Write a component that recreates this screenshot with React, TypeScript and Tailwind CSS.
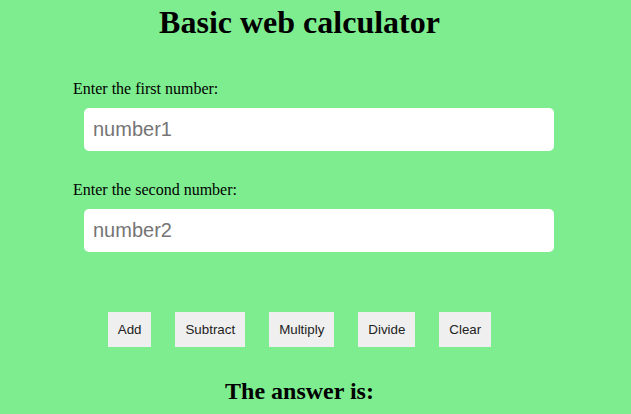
import { useState } from 'react'

const buttons = ['Add', 'Subtract', 'Multiply', 'Divide', 'Clear']

export default function App() {
  const [a, setA] = useState('')
  const [b, setB] = useState('')
  const [answer, setAnswer] = useState<string>('')

  function calc(op: string) {
    const x = parseFloat(a)
    const y = parseFloat(b)
    if (op === 'Clear') {
      setA('')
      setB('')
      setAnswer('')
      return
    }
    if (isNaN(x) || isNaN(y)) return
    if (op === 'Add') setAnswer(String(x + y))
    if (op === 'Subtract') setAnswer(String(x - y))
    if (op === 'Multiply') setAnswer(String(x * y))
    if (op === 'Divide') setAnswer(String(x / y))
  }

  return (
    <div className="min-h-screen w-full bg-[#7eed8f] overflow-hidden font-['Liberation_Serif',serif] text-black">
      <div className="w-[599px] pt-[4px]">
        {/* Title */}
        <h1 className="text-center text-[32px] leading-[37px] font-bold">Basic web calculator</h1>

        {/* Inputs */}
        <label className="block mt-[39px] pl-[73px] text-[16px] leading-[18px]">Enter the first number:</label>
        <input
          value={a}
          onChange={e => setA(e.target.value)}
          placeholder="number1"
          className="block mt-[10px] ml-[84px] w-[470px] h-[43px] rounded-[5px] bg-white pl-[9px] text-[20px] font-['Liberation_Sans',Arial,sans-serif] text-black placeholder:text-[#757575] outline-none"
        />

        <label className="block mt-[30px] pl-[73px] text-[16px] leading-[18px]">Enter the second number:</label>
        <input
          value={b}
          onChange={e => setB(e.target.value)}
          placeholder="number2"
          className="block mt-[10px] ml-[84px] w-[470px] h-[43px] rounded-[5px] bg-white pl-[9px] text-[20px] font-['Liberation_Sans',Arial,sans-serif] text-black placeholder:text-[#757575] outline-none"
        />

        {/* Buttons */}
        <div className="mt-[60px] flex justify-center gap-[24px]">
          {buttons.map(op => (
            <button
              key={op}
              onClick={() => calc(op)}
              className="h-[35px] px-[10px] bg-[#efefef] text-[13.33px] leading-[15px] text-[#222] font-['Liberation_Sans',Arial,sans-serif]"
            >
              {op}
            </button>
          ))}
        </div>

        <h2 className="mt-[30px] text-center text-[24px] leading-[28px] font-bold">
          The answer is:{answer && ` ${answer}`}
        </h2>
      </div>
    </div>
  )
}
